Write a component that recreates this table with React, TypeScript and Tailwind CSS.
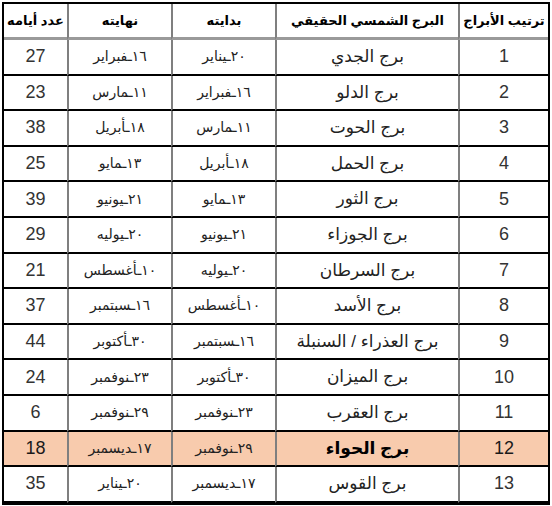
const rows = [
  { n: 1, sign: "برج الجدي", from: "٢٠ـيناير", to: "١٦ـفبراير", days: 27 },
  { n: 2, sign: "برج الدلو", from: "١٦ـفبراير", to: "١١ـمارس", days: 23 },
  { n: 3, sign: "برج الحوت", from: "١١ـمارس", to: "١٨ـأبريل", days: 38 },
  { n: 4, sign: "برج الحمل", from: "١٨ـأبريل", to: "١٣ـمايو", days: 25 },
  { n: 5, sign: "برج الثور", from: "١٣ـمايو", to: "٢١ـيونيو", days: 39 },
  { n: 6, sign: "برج الجوزاء", from: "٢١ـيونيو", to: "٢٠ـيوليه", days: 29 },
  { n: 7, sign: "برج السرطان", from: "٢٠ـيوليه", to: "١٠ـأغسطس", days: 21 },
  { n: 8, sign: "برج الأسد", from: "١٠ـأغسطس", to: "١٦ـسبتمبر", days: 37 },
  { n: 9, sign: "برج العذراء / السنبلة", from: "١٦ـسبتمبر", to: "٣٠ـأكتوبر", days: 44 },
  { n: 10, sign: "برج الميزان", from: "٣٠ـأكتوبر", to: "٢٣ـنوفمبر", days: 24 },
  { n: 11, sign: "برج العقرب", from: "٢٣ـنوفمبر", to: "٢٩ـنوفمبر", days: 6 },
  { n: 12, sign: "برج الحواء", from: "٢٩ـنوفمبر", to: "١٧ـديسمبر", days: 18, hl: true },
  { n: 13, sign: "برج القوس", from: "١٧ـديسمبر", to: "٢٠ـيناير", days: 35 },
];

const headers = ["ترتيب الأبراج", "البرج الشمسي الحقيقي", "بدايته", "نهايته", "عدد أيامه"];

export default function App() {
  return (
    <div className="w-[552px] h-[506px] bg-white pl-[2px] pt-[2px] font-['Liberation_Sans','DejaVu_Sans',sans-serif]">
      <div
        dir="rtl"
        className="w-[548px] border-[2px] border-black grid grid-cols-[90px_183px_104px_104px_1fr]"
      >
        {headers.map((h, i) => (
          <div
            key={h}
            className={`h-[36px] flex items-center justify-center border-b-[3px] border-b-[#9a9a9a] text-[13px] font-bold text-black ${
              i < 4 ? "border-l-2 border-l-[#7f7f7f]" : ""
            }`}
          >
            {h}
          </div>
        ))}
        {rows.map((r) => {
          const bg = r.hl ? "bg-[#f8cbad]" : "bg-white";
          const cell = `h-[35.6px] flex items-center justify-center border-b-2 border-b-black ${bg}`;
          return (
            <div key={r.n} className="contents">
              <div className={`${cell} border-l-2 border-l-[#7f7f7f] text-[18px] ${r.hl ? "text-[#1a1a1a] font-medium" : "text-[#333]"}`}>
                {r.n}
              </div>
              <div className={`${cell} border-l-2 border-l-[#7f7f7f] text-[17px] ${r.hl ? "text-black font-bold" : "text-[#222]"}`}>
                {r.sign}
              </div>
              <div className={`${cell} border-l-2 border-l-[#7f7f7f] text-[14px] text-[#222]`}>{r.from}</div>
              <div className={`${cell} border-l-2 border-l-[#7f7f7f] text-[14px] text-[#222]`}>{r.to}</div>
              <div className={`${cell} text-[18px] ${r.hl ? "text-[#1a1a1a] font-medium" : "text-[#333]"}`}>
                {r.days}
              </div>
            </div>
          );
        })}
      </div>
    </div>
  );
}
